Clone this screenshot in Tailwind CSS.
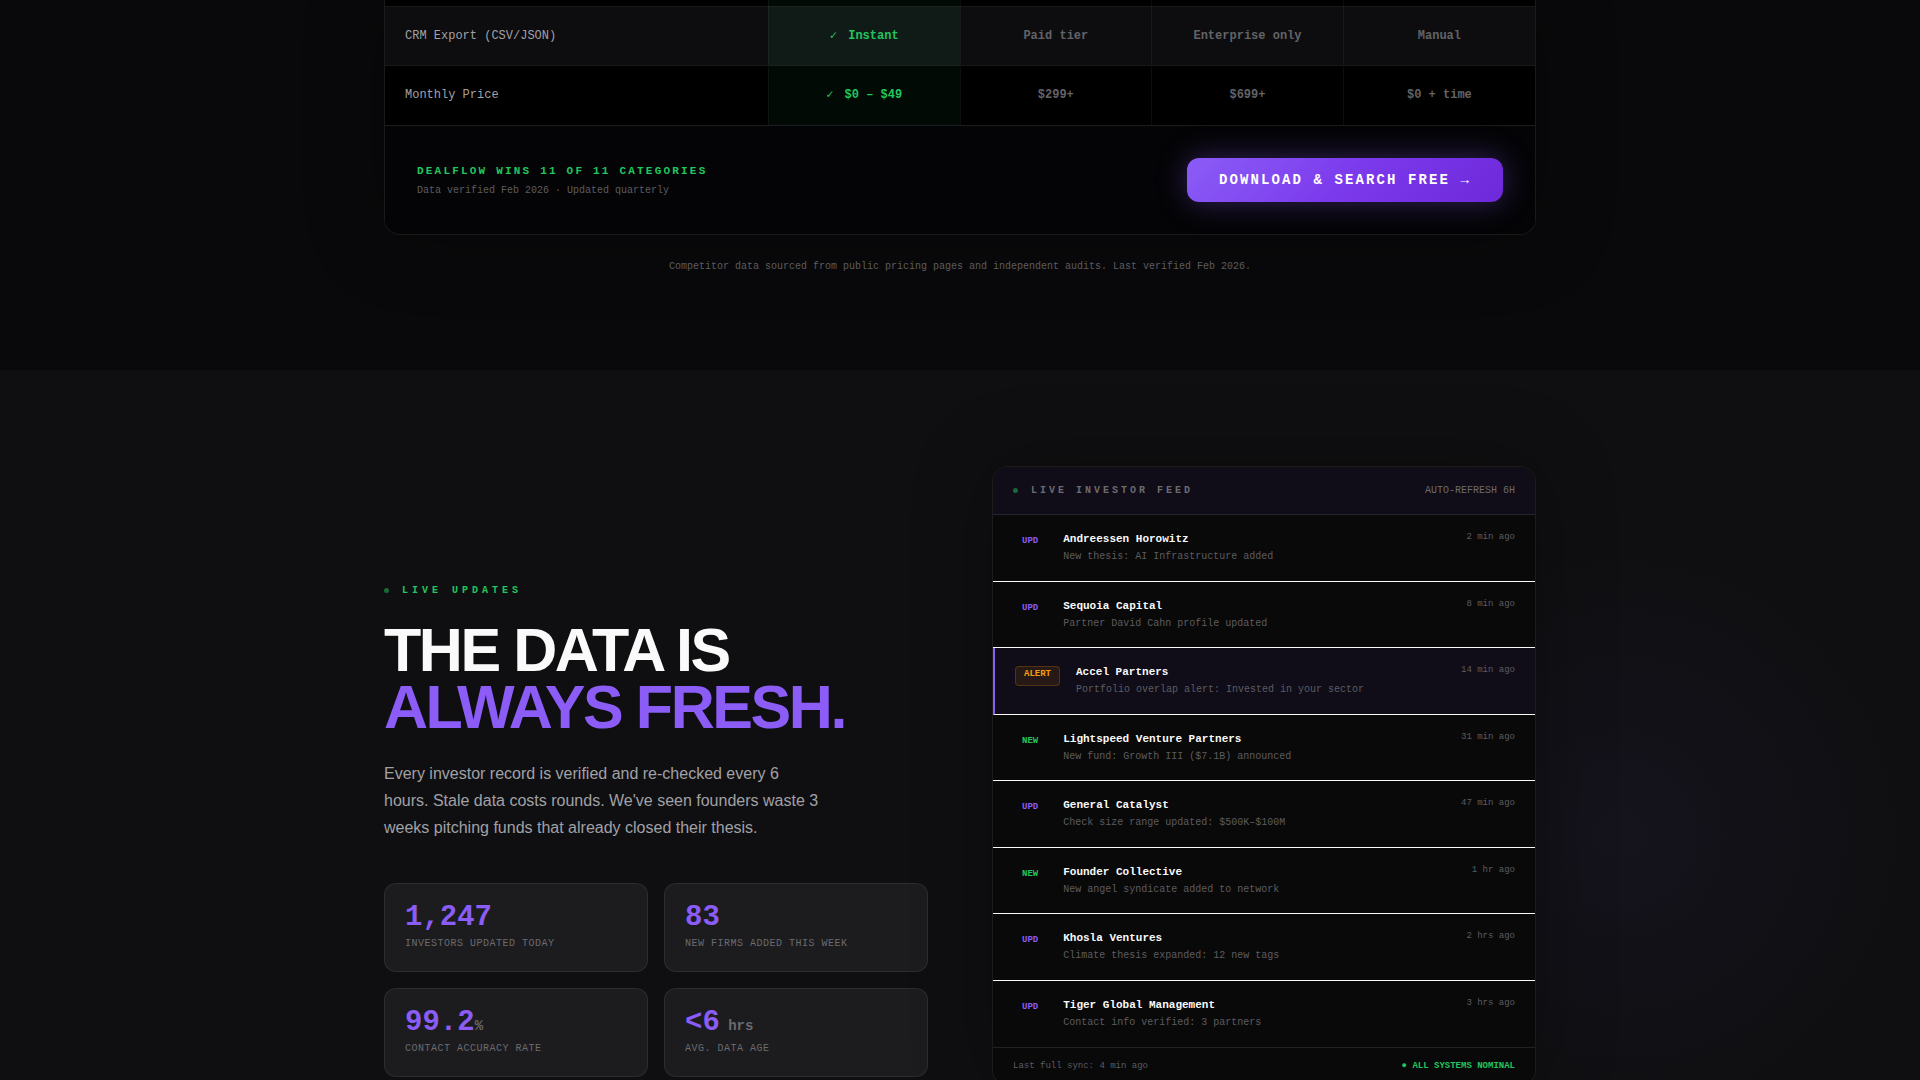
<!DOCTYPE html>
<html lang="en">
<head>
<meta charset="utf-8">
<title>DealFlow</title>
<script src="https://cdn.jsdelivr.net/npm/@tailwindcss/browser@4"></script>
</head>
<body class="h-screen overflow-hidden bg-[#09090b] font-['Liberation_Sans',Arial,sans-serif] leading-normal text-[#fafafa]">

<!-- Comparison table -->
<section class="pb-24">
  <div class="mx-auto max-w-[1200px] px-6">
    <div class="overflow-hidden rounded-b-2xl border border-t-0 border-white/10 bg-black font-['Liberation_Mono',monospace] shadow-[0_0_80px_rgba(0,0,0,0.3)]">
      <table class="w-full table-fixed text-xs leading-[18px]">
        <colgroup><col class="w-1/3"><col class="w-1/6"><col class="w-1/6"><col class="w-1/6"><col class="w-1/6"></colgroup>
        <tbody>
          <tr class="h-[6px] border-b border-white/5">
            <td></td><td class="border-l border-white/5 bg-[#020a05]"></td><td class="border-l border-white/5"></td><td class="border-l border-white/5"></td><td class="border-l border-white/5"></td>
          </tr>
          <tr class="h-[59px] border-b border-white/10 bg-[#0d0d0f] text-center font-bold text-[#636366]">
            <th scope="row" class="px-5 text-left font-normal text-[#a1a1a6]">CRM Export (CSV/JSON)</th>
            <td class="border-l border-white/5 bg-[#101a17] text-[#22c55e]"><span class="mr-1">✓</span> Instant</td>
            <td class="border-l border-white/5">Paid tier</td>
            <td class="border-l border-white/5">Enterprise only</td>
            <td class="border-l border-white/5">Manual</td>
          </tr>
          <tr class="h-[60px] text-center font-bold text-[#636366]">
            <th scope="row" class="px-5 text-left font-normal text-[#a1a1a6]">Monthly Price</th>
            <td class="border-l border-white/5 bg-[#020a05] text-[#22c55e]"><span class="mr-1">✓</span> $0 – $49</td>
            <td class="border-l border-white/5">$299+</td>
            <td class="border-l border-white/5">$699+</td>
            <td class="border-l border-white/5">$0 + time</td>
          </tr>
        </tbody>
      </table>
      <div class="flex items-center justify-between border-t border-white/10 bg-[#040406] p-8">
        <div class="pt-0.5">
          <p class="text-[11px] leading-4 font-bold tracking-[0.2em] text-[#22c55e]">DEALFLOW WINS 11 OF 11 CATEGORIES</p>
          <p class="mt-1 text-[10px] leading-4 text-[#5c5c60]">Data verified Feb 2026 · Updated quarterly</p>
        </div>
        <button type="button" class="h-11 rounded-xl bg-linear-135 from-[#8b5cf6] via-[#7c3aed] to-[#6d28d9] px-8 text-sm font-bold tracking-[0.15em] text-white shadow-[0_0_30px_rgba(139,92,246,0.35)]">DOWNLOAD &amp; SEARCH FREE →</button>
      </div>
    </div>
    <p class="mt-6 text-center font-['Liberation_Mono',monospace] text-[10px] leading-[15px] text-[#5c5c60]">Competitor data sourced from public pricing pages and independent audits. Last verified Feb 2026.</p>
  </div>
</section>

<!-- Live updates -->
<section class="relative min-h-[720px] overflow-hidden bg-[#0f0f11] pt-24">
  <div class="pointer-events-none absolute top-[165px] right-0 size-[600px] bg-radial from-[#8b5cf6]/5 to-transparent to-70%"></div>
  <div class="relative mx-auto grid max-w-[1200px] grid-cols-2 items-start gap-16 px-6">

    <div class="pt-[117px]">
      <p class="flex items-center gap-[13px] font-['Liberation_Mono',monospace] text-[10px] leading-[15px] font-bold tracking-[0.4em] text-[#22c55e]"><span class="size-[5px] rounded-full bg-[#22c55e]/50"></span>LIVE UPDATES</p>
      <h2 class="mt-6 text-[61px] leading-[57px] font-bold tracking-[-0.04em]">THE DATA IS<br><span class="text-[#8b5cf6]">ALWAYS FRESH.</span></h2>
      <p class="mt-6 max-w-[440px] text-base leading-[27px] text-[#a1a1a6]">Every investor record is verified and re-checked every 6 hours. Stale data costs rounds. We've seen founders waste 3 weeks pitching funds that already closed their thesis.</p>
      <div class="mt-[42px] grid grid-cols-2 gap-4 font-['Liberation_Mono',monospace]">
        <div class="rounded-xl border border-white/8 bg-[#1c1c1e] p-5">
          <p class="text-[29px] leading-7 font-bold text-[#8b5cf6]">1,247</p>
          <p class="mt-1 text-[10px] leading-[15px] tracking-wider text-[#6b6b70]">INVESTORS UPDATED TODAY</p>
        </div>
        <div class="rounded-xl border border-white/8 bg-[#1c1c1e] p-5">
          <p class="text-[29px] leading-7 font-bold text-[#8b5cf6]">83</p>
          <p class="mt-1 text-[10px] leading-[15px] tracking-wider text-[#6b6b70]">NEW FIRMS ADDED THIS WEEK</p>
        </div>
        <div class="rounded-xl border border-white/8 bg-[#1c1c1e] p-5">
          <p class="text-[29px] leading-7 font-bold text-[#8b5cf6]">99.2<span class="text-sm leading-none text-[#6b6b70]">%</span></p>
          <p class="mt-1 text-[10px] leading-[15px] tracking-wider text-[#6b6b70]">CONTACT ACCURACY RATE</p>
        </div>
        <div class="rounded-xl border border-white/8 bg-[#1c1c1e] p-5">
          <p class="text-[29px] leading-7 font-bold text-[#8b5cf6]">&lt;6<span class="text-sm leading-none text-[#6b6b70]"> hrs</span></p>
          <p class="mt-1 text-[10px] leading-[15px] tracking-wider text-[#6b6b70]">AVG. DATA AGE</p>
        </div>
      </div>
    </div>

    <div class="overflow-hidden rounded-2xl border border-white/8 bg-[#09090a] font-['Liberation_Mono',monospace] shadow-[0_0_80px_rgba(0,0,0,0.3)]">
      <div class="flex items-center justify-between border-b border-white/10 bg-[#100c18] px-5 py-4 text-[10px] leading-[15px] text-[#6b6b70]">
        <h3 class="flex items-center gap-[13px] font-bold tracking-[0.3em]"><span class="size-[5px] rounded-full bg-[#22c55e]/50"></span>LIVE INVESTOR FEED</h3>
        <span>AUTO-REFRESH 6H</span>
      </div>
      <ul id="feed"></ul>
      <div class="flex items-center justify-between border-t border-white/10 px-5 py-3 text-[9px] leading-[13px]">
        <span class="text-[#5c5c60]">Last full sync: 4 min ago</span>
        <span class="font-bold text-[#22c55e]">● ALL SYSTEMS NOMINAL</span>
      </div>
    </div>
  </div>
</section>

<script>
const badge = {
  UPD: 'border-transparent text-[#8b5cf6]',
  NEW: 'border-transparent text-[#22c55e]',
  ALERT: 'border-[#f59e0b]/20 bg-[#f59e0b]/10 text-[#f59e0b]'
};
const items = [
  ['UPD', 'Andreessen Horowitz', 'New thesis: AI Infrastructure added', '2 min ago'],
  ['UPD', 'Sequoia Capital', 'Partner David Cahn profile updated', '8 min ago'],
  ['ALERT', 'Accel Partners', 'Portfolio overlap alert: Invested in your sector', '14 min ago'],
  ['NEW', 'Lightspeed Venture Partners', 'New fund: Growth III ($7.1B) announced', '31 min ago'],
  ['UPD', 'General Catalyst', 'Check size range updated: $500K–$100M', '47 min ago'],
  ['NEW', 'Founder Collective', 'New angel syndicate added to network', '1 hr ago'],
  ['UPD', 'Khosla Ventures', 'Climate thesis expanded: 12 new tags', '2 hrs ago'],
  ['UPD', 'Tiger Global Management', 'Contact info verified: 3 partners', '3 hrs ago']
];
document.getElementById('feed').innerHTML = items.map(([tag, name, detail, time]) => `
  <li class="flex items-start gap-4 border-b border-b-[#fafafa] px-5 pt-4 odd:h-[67px] even:h-[66px] last:h-[65px] last:border-b-0 ${tag === 'ALERT' ? 'border-l-2 border-l-[#8b5cf6] bg-[#100c18]' : ''}">
    <span class="mt-0.5 rounded border px-2 pt-px pb-1 text-[9px] leading-[13px] font-bold ${badge[tag]}">${tag}</span>
    <div class="flex-1">
      <p class="text-[11px] leading-4 font-bold">${name}</p>
      <p class="mt-0.5 text-[10px] leading-4 text-[#5c5c60]">${detail}</p>
    </div>
    <time class="text-[9px] leading-[13px] text-[#5c5c60]">${time}</time>
  </li>`).join('');
</script>
</body>
</html>
